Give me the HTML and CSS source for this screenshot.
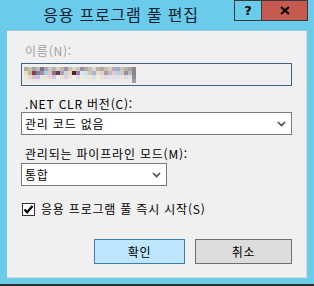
FILE: index.html
```html
<!DOCTYPE html>
<html lang="ko">
<head>
    <meta charset="UTF-8">
    <meta name="viewport" content="width=device-width, initial-scale=1.0">
    <title>응용 프로그램 풀 편집</title>
    <link rel="stylesheet" href="styles.css">
</head>
<body>

    <div class="window">
        <div class="titlebar">
            <div class="title">응용 프로그램 풀 편집</div>
            <div class="caption-btn help">?</div>
            <div class="caption-btn close">
                <svg width="10" height="9" viewBox="0 0 10 9">
                    <path d="M1 1 L9 8 M9 1 L1 8" stroke="#000" stroke-width="2.2" fill="none"/>
                </svg>
            </div>
        </div>

        <div class="client">
            <label class="label disabled">이름(N):</label>
            <div class="textbox"><div class="mosaic" id="mosaic"></div></div>

            <label class="label label-clr">.NET CLR 버전(C):</label>
            <div class="select select-wide">
                <span>관리 코드 없음</span>
                <svg class="chevron" width="9" height="6" viewBox="0 0 9 6">
                    <path d="M1 1 L4.5 4.5 L8 1" stroke="#4a4a4a" stroke-width="1.6" fill="none"/>
                </svg>
            </div>

            <label class="label label-mode">관리되는 파이프라인 모드(M):</label>
            <div class="select select-narrow">
                <span>통합</span>
                <svg class="chevron" width="9" height="6" viewBox="0 0 9 6">
                    <path d="M1 1 L4.5 4.5 L8 1" stroke="#4a4a4a" stroke-width="1.6" fill="none"/>
                </svg>
            </div>

            <div class="check-row">
                <span class="checkbox">
                    <svg width="11" height="11" viewBox="0 0 11 11">
                        <path d="M1.5 5.5 L4.2 8.3 L9.5 2" stroke="#000" stroke-width="2.2" fill="none"/>
                    </svg>
                </span>
                <span>응용 프로그램 풀 즉시 시작(S)</span>
            </div>

            <div class="buttons">
                <button class="btn btn-ok">확인</button>
                <button class="btn btn-cancel">취소</button>
            </div>
        </div>
    </div>

    <script>
        // pixelated name in the textbox
        const rows = [
            'b4ae98 c7c0ac a3a5ab bfb7a8 8a6d7a a8a3b4 c4c8cf b1b7b9 d8d3c0 c9b6a4 a0929e c8c3b8 dcd8c9 cfc7b5 9e8ca2 b5a9a8 c7c1b0 dcdad0 bab3a6 aca7a0 c5bfb0 d5d0c0 b4aab9 8fb4c6 c9c5b8 b8b0a4 a8a0a8 8a8a8a',
            'e8dfc0 c5b49c 8a3f3c 7080b0 9c8fa8 a3d0e8 d6c4c8 a06e6a 5a3f70 b39fb2 c8d8e0 e8d8a8 4e1a3e 9a7ea0 d8e8ec c6e6ee cfc4b8 a8b6d0 e6ddc8 e4d0c0 a69ca8 c2b8c4 e2c8d0 b8cce0 d4c8c0 9a90a4 c0b8c0 858585',
            'f0ead0 e8d8c8 d8c0c8 c8c0d8 e0e8f0 f0e4c8 e8d0d8 d0c8e0 e8f0f0 f0e0d0 d8d0e0 e8e0d8 f0f0e0 e0d8e8 f0e8d8 e0e8e8 ece4dc d8e0e8 f0ecd8 ece0d4 e0dae4 e4e0e8 ecdce0 d8e4ec ece4d8 dcd8e4 e4e0e4 8c8c8c',
            'ecebe6 eae8ea ebe9e6 e9e9ec ecebe8 eae9e6 ebeae9 e9e8ec ecebe7 ebe9e8 eae9eb ecebe8 ebeae6 e9e9eb ecebe7 eae9e8 ebeae9 e9e8eb ecebe6 ebe9e8 eae9ea ecebe8 ebeae7 e9e9eb ecebe8 eae9e8 ebeaea a0a0a0'
        ];
        const mosaic = document.getElementById('mosaic');
        rows.forEach(row => {
            row.split(' ').forEach(color => {
                const cell = document.createElement('span');
                cell.style.background = '#' + color;
                mosaic.appendChild(cell);
            });
        });
    </script>

</body>
</html>
```

FILE: styles.css
```css
* {
    box-sizing: border-box;
}

body {
    margin: 0;
    font-family: "Noto Sans CJK KR", "Noto Sans", sans-serif;
    font-size: 12px;
    letter-spacing: 0.8px;
    color: #000;
}

.window {
    width: 314px;
    height: 286px;
    background: #6acbea;
    border-bottom: 2px solid #2d2d2d;
    display: flex;
    flex-direction: column;
}

.titlebar {
    height: 30px;
    flex-shrink: 0;
    display: flex;
    align-items: flex-start;
    padding-right: 6px;
}

.title {
    flex: 1;
    text-align: center;
    padding-left: 8px;
    font-size: 16px;
    line-height: 29px;
    letter-spacing: 0.8px;
    color: #102030;
}

.caption-btn {
    height: 21px;
    border: 1px solid #3a3a3a;
    display: flex;
    align-items: center;
    justify-content: center;
}

.help {
    width: 28px;
    font-family: "DejaVu Sans", sans-serif;
    font-weight: bold;
    font-size: 13px;
    letter-spacing: 0;
}

.close {
    width: 46px;
    border-left: none;
    background: #c75a50;
}

.client {
    margin: 0 7px;
    height: 248px;
    flex-shrink: 0;
    background: #f0f0f0;
    border-top: 1px solid #9cc6dc;
    border-right: 1px solid #dadada;
    border-bottom: 1px solid #dadada;
    padding: 12px 0 0 14px;
    display: flex;
    flex-direction: column;
    align-items: flex-start;
}

.label {
    display: block;
    line-height: 16px;
    margin-left: 4px;
    white-space: nowrap;
}

.disabled {
    color: #a0a0a0;
}

.textbox {
    margin-top: 4px;
    width: 271px;
    height: 23px;
    border: 1px solid #3f6283;
    padding: 3px 2px;
}

.mosaic {
    display: grid;
    grid-template-columns: repeat(28, 4px);
    grid-auto-rows: 4px;
}

.label-clr {
    margin-top: 10px;
}

.label-mode {
    margin-top: 11px;
}

.select {
    height: 23px;
    border: 1px solid #7a7a7a;
    background: #fff;
    display: flex;
    align-items: center;
    justify-content: space-between;
    padding: 0 5px 0 3px;
    white-space: nowrap;
}

.select-wide {
    width: 271px;
}

.select-narrow {
    width: 146px;
    margin-top: 1px;
}

.check-row {
    margin-top: 15px;
    margin-left: 1px;
    display: flex;
    align-items: center;
    gap: 6px;
    line-height: 16px;
    white-space: nowrap;
}

.checkbox {
    width: 13px;
    height: 13px;
    border: 1px solid #333;
    background: #fff;
    display: flex;
    align-items: center;
    justify-content: center;
}

.buttons {
    margin-top: 22px;
    margin-left: 73px;
    display: flex;
    gap: 10px;
}

.btn {
    height: 25px;
    padding: 0;
    font-family: inherit;
    font-size: 12px;
    letter-spacing: 0.8px;
    color: #000;
}

.btn-ok {
    width: 91px;
    border: 1px solid #3c7fb1;
    background: #bee6fd;
}

.btn-cancel {
    width: 97px;
    border: 1px solid #707070;
    background: #dddddd;
}
```
